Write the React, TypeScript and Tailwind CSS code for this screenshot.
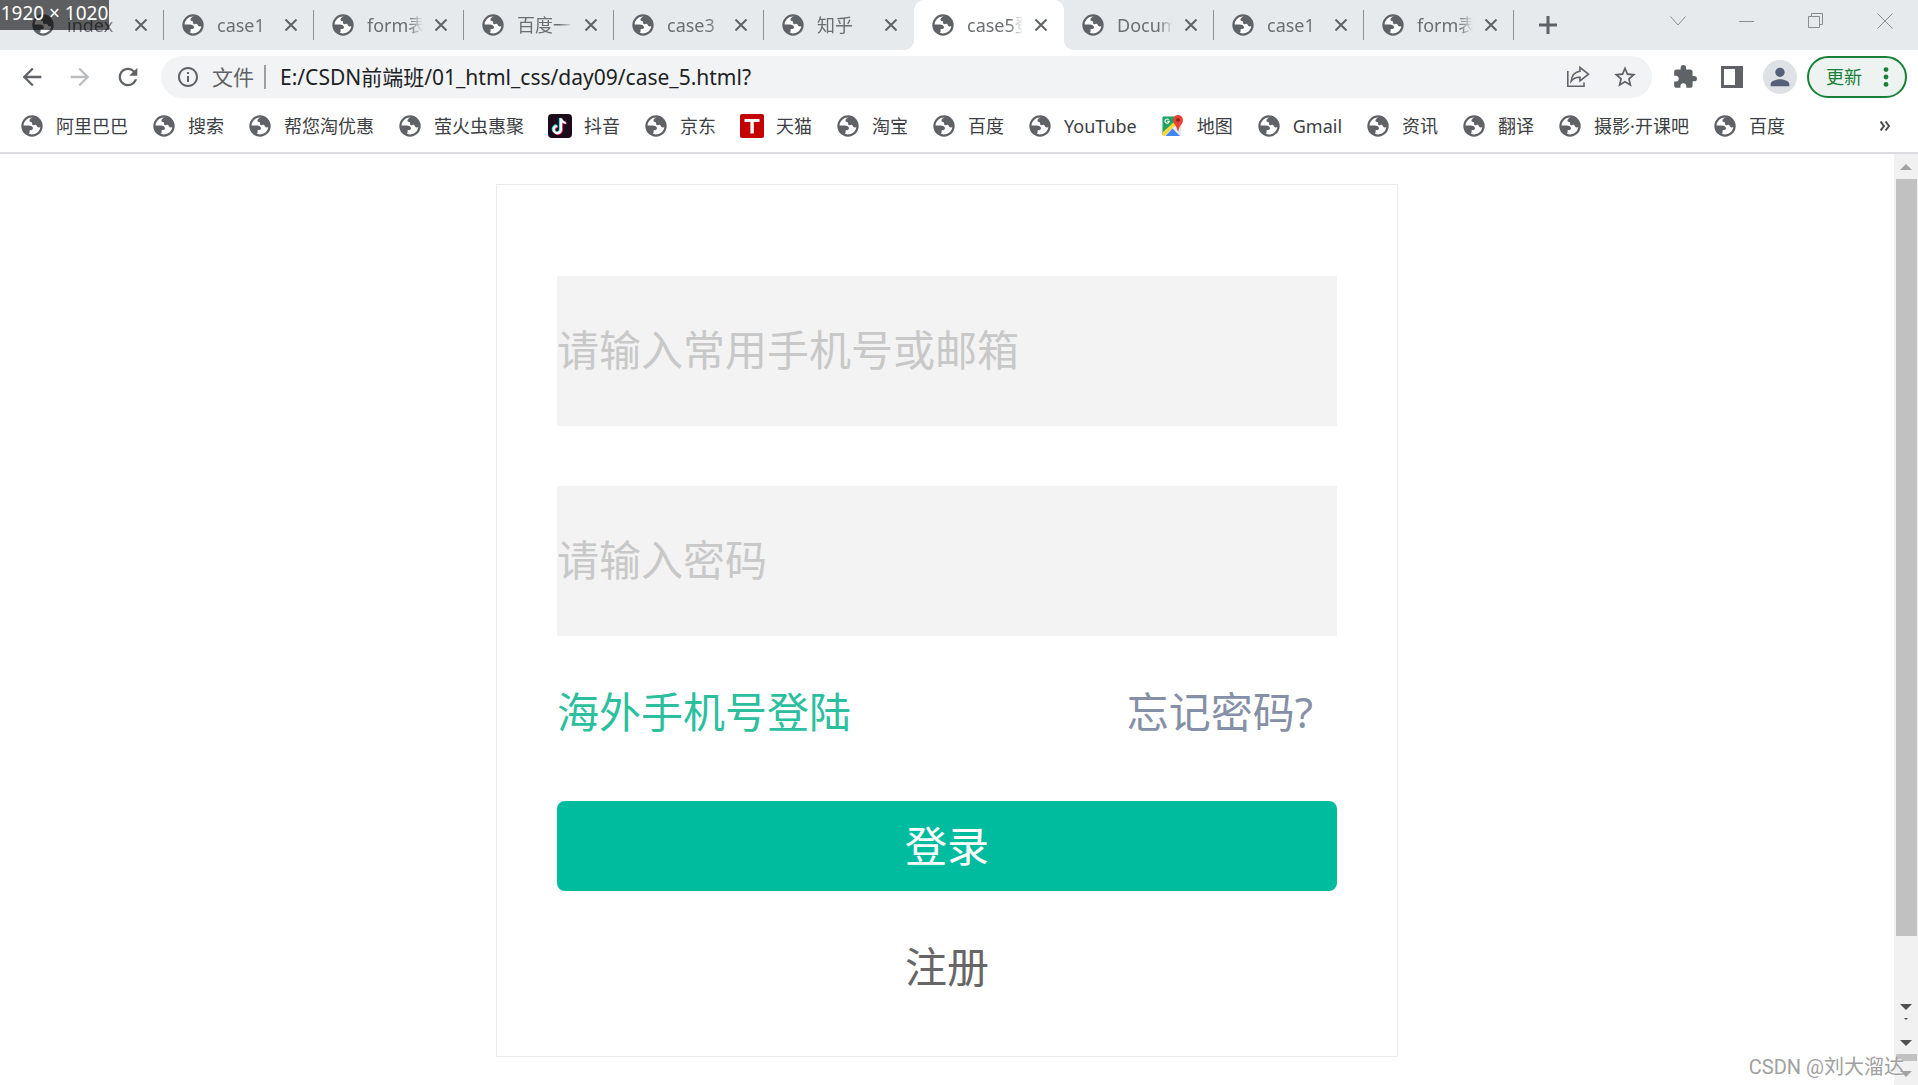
import React, { useState } from "react";
import { MdOutlineInfo, MdExtension, MdPerson, MdRefresh, MdArrowBack, MdArrowForward, MdStarBorder } from "react-icons/md";

type Tab = { title: string; active?: boolean; line?: boolean };

const tabs: Tab[] = [
  { title: "index", line: true },
  { title: "case1", line: true },
  { title: "form表单", line: true },
  { title: "百度一下", line: true },
  { title: "case3", line: true },
  { title: "知乎" },
  { title: "case5登录", active: true },
  { title: "Document", line: true },
  { title: "case1", line: true },
  { title: "form表单", line: true },
];

const bookmarks = [
  { label: "阿里巴巴" },
  { label: "搜索" },
  { label: "帮您淘优惠" },
  { label: "萤火虫惠聚" },
  { label: "抖音", icon: "tiktok" },
  { label: "京东" },
  { label: "天猫", icon: "tmall" },
  { label: "淘宝" },
  { label: "百度" },
  { label: "YouTube" },
  { label: "地图", icon: "maps" },
  { label: "Gmail" },
  { label: "资讯" },
  { label: "翻译" },
  { label: "摄影·开课吧" },
  { label: "百度" },
];

const Globe = () => (
  <svg viewBox="0 0 22 22" className="size-[22px] shrink-0">
    <circle cx="11" cy="11" r="9.6" fill="#fff" stroke="#5f6368" strokeWidth="2.2" />
    <path
      fill="#5f6368"
      d="M12 2 C10 3 8.4 4.4 8.4 5.8 C8.4 7 9.6 7 10.6 7.2 C11.8 7.6 10.4 9.2 11.6 10 C12.8 10.8 13.6 9.4 15 10 C16 10.6 15.6 12.2 17.4 12.4 L20.4 12 C21 6 16.5 1.8 12 2 Z M1.6 10.4 H8 C10 10.4 12 11.6 12 13.2 C12 14.6 10.8 15 9.4 15 C8.2 15 8.6 16.2 8.6 17 C8.6 18.2 8 19 7 19.6 C3.4 17.6 1.2 14.4 1.6 10.4 Z"
    />
  </svg>
);

const TiktokIcon = () => (
  <svg viewBox="0 0 24 24" className="size-6 shrink-0">
    <rect width="24" height="24" rx="4" fill="#1c0b1a" />
    <g fill="none" strokeWidth="2.2">
      <path stroke="#25f4ee" d="M12 4 V15 A3.6 3.6 0 1 1 8.4 11.4 M12 4 Q12.6 8 16.8 8.2" />
      <path stroke="#fe2c55" d="M13.8 5 V16 A3.6 3.6 0 1 1 10 12.6 M13.8 5 Q14.4 9 18.4 9.4" />
      <path stroke="#fff" d="M13 4.4 V15.6 A3.6 3.6 0 1 1 9.2 12 M13 4.4 Q13.6 8.4 17.8 8.8" />
    </g>
  </svg>
);

const TmallIcon = () => (
  <svg viewBox="0 0 24 24" className="size-6 shrink-0">
    <rect width="24" height="24" rx="2" fill="#c40000" />
    <rect x="4.5" y="5" width="15" height="3" fill="#fff" />
    <rect x="10.4" y="5" width="3.4" height="14.5" fill="#fff" />
  </svg>
);

const MapsIcon = () => (
  <svg viewBox="0 0 24 24" className="size-6 shrink-0">
    <rect x="1.5" y="2.5" width="19" height="19.5" rx="1" fill="#e8eaed" />
    <path fill="#1ea362" d="M1.5 3.5 a1 1 0 0 1 1-1 H15 V8.5 L1.5 21 Z" />
    <path fill="#fdd835" d="M1.5 18.6 L14 7 L16 9.4 L3.5 22 H2.5 a1 1 0 0 1-1-1 Z" />
    <path fill="#4285f4" d="M4.5 22 L11.5 14.5 L19 22 Z" />
    <path fill="none" stroke="#fff" strokeWidth="1.2" d="M7.6 5.6 A2.1 2.1 0 1 0 8.2 7.4 H6.4" />
    <path fill="#ea4335" d="M17 1 a5 5 0 0 1 5 5 c0 4.2-4 5.6-4.6 11 h-.8 C16 11.6 12 10.2 12 6 a5 5 0 0 1 5-5 Z" />
    <circle cx="17" cy="6" r="1.7" fill="#7b231b" />
  </svg>
);

const BookmarkIcon = ({ name }: { name?: string }) => {
  if (name === "tiktok") return <TiktokIcon />;
  if (name === "tmall") return <TmallIcon />;
  if (name === "maps") return <MapsIcon />;
  return (
    <span className="flex size-6 shrink-0 items-center justify-center">
      <Globe />
    </span>
  );
};

const TabStrip = () => (
  <div className="flex h-[50px] bg-[#e6eaed] pl-[14px]">
    {tabs.map((tab, index) => (
      <div
        key={index}
        className={`relative flex w-[150px] shrink-0 items-center pl-[18px] pr-[13px] ${
          tab.active ? "rounded-t-[10px] bg-white" : ""
        }`}
      >
        <Globe />
        <span className="ml-[13px] w-[56px] overflow-hidden whitespace-nowrap text-[18px] leading-6 text-[#6b6f73] [mask-image:linear-gradient(to_right,#000_75%,transparent)]">
          {tab.title}
        </span>
        <button type="button" aria-label={`关闭 ${tab.title}`} className="ml-auto flex size-5 items-center justify-center">
          <svg viewBox="0 0 12 12" className="size-3 fill-none stroke-[#5f6368] stroke-2">
            <path d="M0.5 0.5 L11.5 11.5 M11.5 0.5 L0.5 11.5" />
          </svg>
        </button>
        {tab.line && <span className="absolute top-[10px] right-0 h-[30px] w-px bg-[#8c9094]" />}
        {tab.active && (
          <>
            <span className="absolute bottom-0 -left-[10px] size-[10px] bg-[radial-gradient(circle_at_0_0,#e6eaed_10px,#fff_10px)]" />
            <span className="absolute bottom-0 -right-[10px] size-[10px] bg-[radial-gradient(circle_at_100%_0,#e6eaed_10px,#fff_10px)]" />
          </>
        )}
      </div>
    ))}
    <button type="button" aria-label="新标签页" className="ml-[25px] flex items-center">
      <svg viewBox="0 0 18 18" className="size-[18px] fill-none stroke-[#5f6368] stroke-3">
        <path d="M9 0 V18 M0 9 H18" />
      </svg>
    </button>
    <div className="mr-[25px] ml-auto flex h-[42px] items-center gap-[53px]">
      <button type="button" aria-label="搜索标签页">
        <svg viewBox="0 0 16 16" className="size-4 fill-none stroke-[#8a8d90]">
          <path d="M0.5 3.5 L8 12 L15.5 3.5" />
        </svg>
      </button>
      <button type="button" aria-label="最小化">
        <svg viewBox="0 0 16 16" className="size-4 fill-none stroke-[#8a8d90]">
          <path d="M0 8.5 H15" />
        </svg>
      </button>
      <button type="button" aria-label="还原">
        <svg viewBox="0 0 16 16" className="size-4 fill-none stroke-[#8a8d90]">
          <path d="M0.5 3.5 H11.5 V14.5 H0.5 Z M3.5 3.5 V0.5 H14.5 V11.5 H11.5" />
        </svg>
      </button>
      <button type="button" aria-label="关闭">
        <svg viewBox="0 0 16 16" className="size-4 fill-none stroke-[#8a8d90]">
          <path d="M0.5 0.5 L15.5 15.5 M15.5 0.5 L0.5 15.5" />
        </svg>
      </button>
    </div>
  </div>
);

const Toolbar = () => {
  const [url, setUrl] = useState("E:/CSDN前端班/01_html_css/day09/case_5.html?");

  return (
    <div className="flex h-[54px] items-center pr-[11px] pl-[18px] text-[#5f6368]">
      <button type="button" aria-label="后退">
        <MdArrowBack className="size-7" />
      </button>
      <button type="button" aria-label="前进" className="ml-5 text-[#babcbe]">
        <MdArrowForward className="size-7" />
      </button>
      <button type="button" aria-label="重新加载" className="ml-5">
        <MdRefresh className="size-7" />
      </button>
      <div className="ml-[19px] flex h-[42px] flex-1 items-center rounded-full bg-[#f1f3f4] pr-[14px] pl-[15px]">
        <MdOutlineInfo className="size-6" />
        <label htmlFor="url" className="ml-3 text-[21px] leading-7">
          文件
        </label>
        <span className="mx-[10px] h-6 w-[2px] bg-[#9aa0a6]" />
        <input
          id="url"
          type="text"
          value={url}
          onChange={(e) => setUrl(e.target.value)}
          className="ml-1 min-w-0 flex-1 bg-transparent text-[21px] leading-7 text-[#202124] outline-none"
        />
        <button type="button" aria-label="分享">
          <svg viewBox="0 0 24 24" className="size-6 fill-none stroke-[#5f6368] stroke-[1.6]">
            <path d="M1.8 6 V21.2 H18 V17.5" />
            <path d="M14 2.5 L22.5 9.2 L14 15.8 V12.2 C10 12 7.4 13.2 5.2 16.2 C5.8 10.6 8.8 6.8 14 6.2 Z" />
          </svg>
        </button>
        <button type="button" aria-label="为此标签页添加书签" className="ml-[22px]">
          <MdStarBorder className="size-[26px]" />
        </button>
      </div>
      <button type="button" aria-label="扩展程序" className="ml-5">
        <MdExtension className="size-[26px]" />
      </button>
      <button type="button" aria-label="侧边栏" className="ml-[23px]">
        <svg viewBox="0 0 22 22" className="size-[22px]">
          <path fill="#5f6368" fillRule="evenodd" d="M0 0 H22 V22 H0 Z M3 3 V19 H14 V3 Z" />
        </svg>
      </button>
      <button
        type="button"
        aria-label="个人资料"
        className="ml-5 flex size-[34px] items-center justify-center rounded-full bg-[#dee1e6] text-[#56607a]"
      >
        <MdPerson className="size-7" />
      </button>
      <button
        type="button"
        className="ml-[10px] flex h-[42px] w-[100px] items-center justify-between rounded-full border-2 border-[#188038] bg-[#edf3f0] pr-4 pl-[17px] text-[18px] text-[#188038]"
      >
        更新
        <svg viewBox="0 0 6 20" className="h-5 w-[6px] fill-[#188038]">
          <circle cx="3" cy="2.6" r="2.4" />
          <circle cx="3" cy="10" r="2.4" />
          <circle cx="3" cy="17.4" r="2.4" />
        </svg>
      </button>
    </div>
  );
};

const BookmarksBar = () => (
  <div className="flex h-[50px] items-center border-b-2 border-[#dadce0] pr-[28px] pb-1 pl-5">
    <nav className="flex items-center gap-6">
      {bookmarks.map((item, index) => (
        <a key={index} href="#" className="flex items-center gap-3 whitespace-nowrap text-[18px] leading-6 text-[#3c4043]">
          <BookmarkIcon name={item.icon} />
          {item.label}
        </a>
      ))}
    </nav>
    <button type="button" aria-label="更多书签" className="ml-auto">
      <svg viewBox="0 0 10 10" className="size-[10px] fill-none stroke-[#4a4d51] stroke-2">
        <path d="M0.5 0.5 L4 5 L0.5 9.5 M5.5 0.5 L9 5 L5.5 9.5" />
      </svg>
    </button>
  </div>
);

const LoginForm = () => {
  const [account, setAccount] = useState("");
  const [password, setPassword] = useState("");

  const inputClass =
    "block h-[150px] w-full bg-[#f3f3f3] pb-1 text-[42px] outline-none placeholder:text-[#c8c8c8]";

  return (
    <form
      onSubmit={(e) => e.preventDefault()}
      className="mx-auto mt-[30px] w-full max-w-[902px] border border-[#ebebeb] px-[60px] pt-[91px] pb-11 text-[42px] leading-[60px]"
    >
      <input
        type="text"
        aria-label="手机号或邮箱"
        placeholder="请输入常用手机号或邮箱"
        value={account}
        onChange={(e) => setAccount(e.target.value)}
        className={inputClass}
      />
      <input
        type="password"
        aria-label="密码"
        placeholder="请输入密码"
        value={password}
        onChange={(e) => setPassword(e.target.value)}
        className={`${inputClass} mt-[60px]`}
      />
      <div className="mt-[46px] flex justify-between pr-6">
        <a href="#" className="text-[#2bbf9e]">
          海外手机号登陆
        </a>
        <a href="#" className="text-[#8590a6]">
          忘记密码?
        </a>
      </div>
      <button type="submit" className="mt-[59px] block h-[90px] w-full rounded-lg bg-[#00bc9f] text-white">
        登录
      </button>
      <button type="button" className="mt-[31px] block h-[90px] w-full text-[#666]">
        注册
      </button>
    </form>
  );
};

const ScrollBar = () => (
  <div className="flex w-6 shrink-0 flex-col items-center bg-[#f1f1f1]">
    <svg viewBox="0 0 12 6" className="mt-[10px] h-[6px] w-3 fill-[#a3a3a3]">
      <path d="M6 0 L12 6 H0 Z" />
    </svg>
    <div className="mt-[9px] mr-px ml-[2px] w-[21px] flex-[757] bg-[#c1c1c1]" />
    <div className="flex-[68]" />
    <svg viewBox="0 0 12 16" className="h-4 w-3 fill-[#505050]">
      <path d="M0 0 H12 L6 6 Z M4 14 H8 L6 16 Z" />
    </svg>
    <svg viewBox="0 0 12 6" className="mt-5 h-[6px] w-3 fill-[#505050]">
      <path d="M0 0 H12 L6 6 Z" />
    </svg>
    <div className="mt-2 mr-px ml-[2px] h-[7px] w-[21px] bg-[#c1c1c1]" />
    <svg viewBox="0 0 12 6" className="mt-[10px] mb-2 h-[6px] w-3 fill-[#a3a3a3]">
      <path d="M0 0 H12 L6 6 Z" />
    </svg>
  </div>
);

const App: React.FC = () => {
  return (
    <div className="relative flex min-h-screen flex-col bg-white font-['Noto_Sans','Noto_Sans_CJK_SC',sans-serif]">
      <TabStrip />
      <Toolbar />
      <BookmarksBar />
      <div className="flex flex-1">
        <main className="min-w-0 flex-1 pb-7">
          <LoginForm />
        </main>
        <ScrollBar />
      </div>

      {/* Window size badge */}
      <div className="absolute top-0 left-0 flex h-[30px] w-[109px] items-center justify-center bg-black/60 pb-1 text-[19px] whitespace-nowrap text-white">
        1920 × 1020
      </div>

      {/* Watermark */}
      <div className="absolute right-[14px] bottom-1 font-['Roboto','Noto_Sans_CJK_SC',sans-serif] text-[20px] leading-7 text-[#a0a0a0] [text-shadow:-1px_-1px_0_#fff]">
        CSDN @刘大溜达
      </div>
    </div>
  );
};

export default App;
